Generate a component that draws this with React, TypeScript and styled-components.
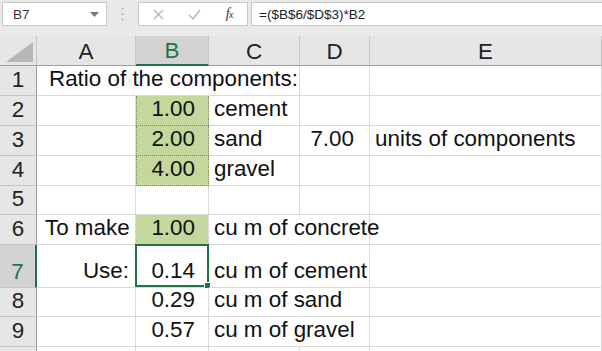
import React from 'react';
import styled, { createGlobalStyle, css } from 'styled-components';

const GREEN = '#217346';
const GRID = '#d9d9d9';

const GlobalStyle = createGlobalStyle`
  html, body {
    margin: 0;
    padding: 0;
    background: #ffffff;
  }
  body {
    font-family: "Liberation Sans", Arial, sans-serif;
    width: 602px;
    height: 351px;
    overflow: hidden;
  }
`;

const Window = styled.div`
  width: 602px;
  height: 351px;
  overflow: hidden;
  background: #fff;
`;

const FormulaBar = styled.div`
  height: 36px;
  background: #e9e9e9;
  display: flex;
  align-items: flex-start;
  padding-top: 2px;
  box-sizing: border-box;
  padding-left: 2px;
`;

const NameBox = styled.div`
  width: 105px;
  height: 24px;
  box-sizing: border-box;
  background: #fff;
  border: 1px solid #c8c8c8;
  display: flex;
  align-items: center;
  justify-content: space-between;
  padding: 0 7px 0 10px;
  font-size: 13.5px;
  color: #333;
`;

const Grip = styled.div`
  width: 31px;
  height: 24px;
  display: flex;
  align-items: center;
  justify-content: center;
`;

const IconBox = styled.div`
  width: 110px;
  height: 24px;
  box-sizing: border-box;
  background: #fff;
  border: 1px solid #c8c8c8;
  display: flex;
  align-items: center;
  justify-content: space-between;
  padding: 0 14px 0 14px;
`;

const Fx = styled.span`
  font-family: "Liberation Serif", "Times New Roman", serif;
  font-style: italic;
  font-size: 14px;
  color: #333;
  letter-spacing: -0.5px;
  & sub {
    font-size: 10px;
    vertical-align: baseline;
  }
`;

const FormulaInput = styled.div`
  flex: 1;
  margin-left: 3px;
  height: 24px;
  box-sizing: border-box;
  background: #fff;
  border: 1px solid #c8c8c8;
  border-right: none;
  display: flex;
  align-items: center;
  padding-left: 7px;
  font-size: 13.5px;
  color: #222;
`;

const Sheet = styled.div`
  display: grid;
  grid-template-columns: 37px 99px 73px 91px 70px 1fr;
  grid-auto-rows: 30px;
  font-size: 22.4px;
  color: #111;
`;

const Corner = styled.div`
  background: #e6e6e6;
  border-right: 1px solid #c6c6c6;
  border-bottom: 1px solid #9e9e9e;
  box-sizing: border-box;
  display: flex;
  align-items: flex-end;
  justify-content: flex-end;
  padding: 0 3px 3px 0;
`;

const ColHead = styled.div<{ $active?: boolean }>`
  background: ${(p) => (p.$active ? '#d3d3d3' : '#e6e6e6')};
  color: ${(p) => (p.$active ? GREEN : '#222')};
  border-right: 1px solid #c6c6c6;
  border-bottom: ${(p) => (p.$active ? `2px solid ${GREEN}` : '1px solid #9e9e9e')};
  box-sizing: border-box;
  display: flex;
  align-items: center;
  justify-content: center;
  padding-top: 2px;
`;

const RowHead = styled.div<{ $active?: boolean }>`
  background: ${(p) => (p.$active ? '#d3d3d3' : '#e6e6e6')};
  color: ${(p) => (p.$active ? GREEN : '#222')};
  border-right: ${(p) => (p.$active ? `2px solid ${GREEN}` : '1px solid #9e9e9e')};
  border-bottom: 1px solid #c6c6c6;
  box-sizing: border-box;
  display: flex;
  align-items: flex-end;
  justify-content: center;
  padding-bottom: 3px;
  line-height: 24px;
`;

const Cell = styled.div<{
  $align?: 'left' | 'right';
  $fill?: boolean;
  $spill?: boolean;
  $dotted?: boolean;
  $pad?: number;
}>`
  position: relative;
  box-sizing: border-box;
  border-right: 1px solid ${(p) => (p.$spill ? 'transparent' : GRID)};
  border-bottom: 1px solid ${GRID};
  background: ${(p) => (p.$fill ? '#c4d89d' : '#fff')};
  display: flex;
  align-items: flex-end;
  justify-content: ${(p) => (p.$align === 'right' ? 'flex-end' : 'flex-start')};
  white-space: nowrap;
  line-height: 24px;
  padding: 0 ${(p) => (p.$align === 'right' ? p.$pad ?? 13 : 0)}px 4px
    ${(p) => (p.$align === 'right' ? 0 : p.$pad ?? 5)}px;
  ${(p) =>
    p.$spill &&
    css`
      z-index: 1;
      overflow: visible;
      background: transparent;
    `}
  ${(p) =>
    p.$dotted &&
    css`
      border: 1px dotted #7d8a66;
      border-top: none;
    `}
`;

const Selected = styled.div`
  position: absolute;
  inset: -1px -1px 0 -1px;
  border: 2px solid ${GREEN};
  pointer-events: none;
  &::after {
    content: '';
    position: absolute;
    right: -4px;
    bottom: -4px;
    width: 5px;
    height: 5px;
    background: ${GREEN};
    border: 1px solid #fff;
  }
`;

type CellDef = {
  text?: string;
  align?: 'left' | 'right';
  fill?: boolean;
  spill?: boolean;
  dotted?: boolean;
  pad?: number;
  selected?: boolean;
};

type RowDef = { n: number; h: number; label?: boolean; cells: CellDef[] };

const blank = (): CellDef[] => [{}, {}, {}, {}, {}];

const rows: RowDef[] = [
  {
    n: 1,
    h: 30,
    cells: [
      { text: 'Ratio of the components:', spill: true, pad: 12 },
      { spill: true },
      {},
      {},
      {},
    ],
  },
  {
    n: 2,
    h: 30,
    cells: [{}, { text: '1.00', align: 'right', fill: true, dotted: true }, { text: 'cement' }, {}, {}],
  },
  {
    n: 3,
    h: 30,
    cells: [
      {},
      { text: '2.00', align: 'right', fill: true, dotted: true },
      { text: 'sand' },
      { text: '7.00', align: 'right', pad: 15 },
      { text: 'units of components' },
    ],
  },
  {
    n: 4,
    h: 30,
    cells: [{}, { text: '4.00', align: 'right', fill: true, dotted: true }, { text: 'gravel' }, {}, {}],
  },
  { n: 5, h: 29, cells: blank() },
  {
    n: 6,
    h: 30,
    cells: [
      { text: 'To make', pad: 8 },
      { text: '1.00', align: 'right', fill: true },
      { text: 'cu m of concrete', spill: true },
      {},
      {},
    ],
  },
  {
    n: 7,
    h: 43,
    cells: [
      { text: 'Use:', align: 'right', pad: 6 },
      { text: '0.14', align: 'right', selected: true },
      { text: 'cu m of cement', spill: true },
      {},
      {},
    ],
  },
  {
    n: 8,
    h: 29,
    cells: [{}, { text: '0.29', align: 'right' }, { text: 'cu m of sand', spill: true }, {}, {}],
  },
  {
    n: 9,
    h: 30,
    cells: [{}, { text: '0.57', align: 'right' }, { text: 'cu m of gravel', spill: true }, {}, {}],
  },
  // only a sliver of row 10 is visible, so its number is not drawn
  { n: 10, h: 30, label: false, cells: blank() },
];

const cols = ['A', 'B', 'C', 'D', 'E'];

export default function App() {
  return (
    <Window>
      <GlobalStyle />
      <FormulaBar>
        <NameBox>
          <span>B7</span>
          <svg width="9" height="5" viewBox="0 0 9 5">
            <path d="M0 0h9L4.5 5z" fill="#777" />
          </svg>
        </NameBox>
        <Grip>
          <svg width="3" height="14" viewBox="0 0 3 14">
            <circle cx="1.5" cy="1.5" r="1" fill="#aaa" />
            <circle cx="1.5" cy="7" r="1" fill="#aaa" />
            <circle cx="1.5" cy="12.5" r="1" fill="#aaa" />
          </svg>
        </Grip>
        <IconBox>
          <svg width="11" height="11" viewBox="0 0 11 11">
            <path d="M1 1l9 9M10 1l-9 9" stroke="#b5b5b5" strokeWidth="1.4" />
          </svg>
          <svg width="13" height="11" viewBox="0 0 13 11">
            <path d="M1 6l4 4 7-9" stroke="#b5b5b5" strokeWidth="1.4" fill="none" />
          </svg>
          <Fx>
            f<sub>x</sub>
          </Fx>
        </IconBox>
        <FormulaInput>=($B$6/$D$3)*B2</FormulaInput>
      </FormulaBar>
      <Sheet style={{ gridTemplateRows: `30px ${rows.map((r) => `${r.h}px`).join(' ')}` }}>
        <Corner>
          <svg width="27" height="20" viewBox="0 0 27 20">
            <path d="M27 0v20H0z" fill="#b7b7b7" />
          </svg>
        </Corner>
        {cols.map((c) => (
          <ColHead key={c} $active={c === 'B'}>
            {c}
          </ColHead>
        ))}
        {rows.map((r) => (
          <React.Fragment key={r.n}>
            <RowHead $active={r.n === 7}>{r.label === false ? '' : r.n}</RowHead>
            {r.cells.map((c, i) => (
              <Cell
                key={i}
                $align={c.align}
                $fill={c.fill}
                $spill={c.spill}
                $dotted={c.dotted}
                $pad={c.pad}
              >
                {c.text}
                {c.selected && <Selected />}
              </Cell>
            ))}
          </React.Fragment>
        ))}
      </Sheet>
    </Window>
  );
}
